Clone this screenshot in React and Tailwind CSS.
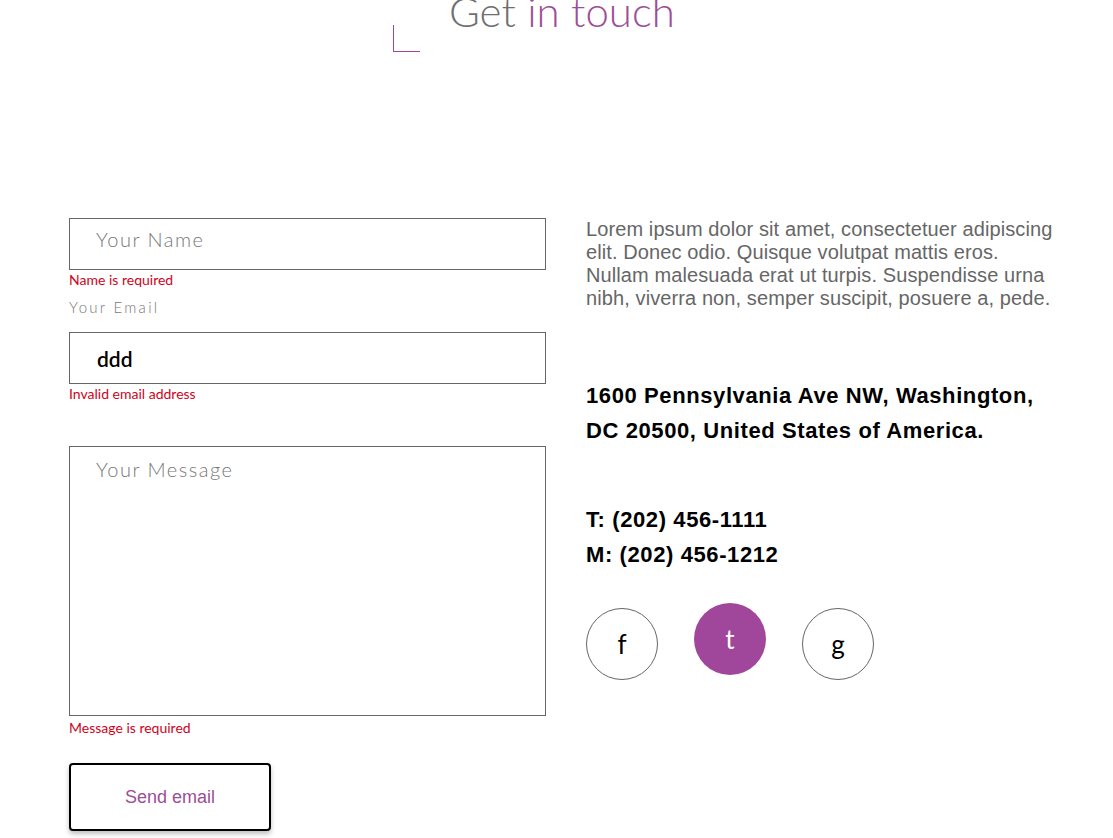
import React from "react";

export default function App() {
  return (
    <div className="min-h-[838px] w-[1113px] bg-white overflow-hidden" style={{ fontFamily: "Lato, 'Open Sans', sans-serif" }}>
      {/* Header */}
      <div className="flex items-start pl-[393px]">
        <div className="mt-[25px] h-[27px] w-[27px] border-l border-b border-[#a0469b]" />
        <h1 className="ml-[29px] mt-[-11px] text-[42px] leading-[44px] font-light text-[#6f6f6f]" style={{ fontFamily: "Lato, sans-serif" }}>
          Get <span className="text-[#9b4f96]">in touch</span>
        </h1>
      </div>

      <div className="flex gap-[40px] pl-[69px] pt-[166px]">
        {/* Form */}
        <form className="flex w-[477px] flex-col" onSubmit={(e) => e.preventDefault()}>
          <input
            type="text"
            placeholder="Your Name"
            className="h-[52px] w-full border border-[#666] bg-white pl-[26px] pb-[10px] text-[20px] font-light tracking-[1.5px] text-black outline-none placeholder:text-[#777]"
            style={{ fontFamily: "Lato, sans-serif" }}
          />
          <p className="mt-[1px] text-[14px] leading-[18px] text-[#d0021b]">Name is required</p>
          <label className="mt-[8px] text-[15px] leading-[20px] font-light tracking-[2.3px] text-[#777]">Your Email</label>
          <input
            type="text"
            defaultValue="ddd"
            className="mt-[15px] h-[52px] w-full border border-[#666] bg-white pl-[27px] text-[21px] font-semibold text-black outline-none"
            style={{ fontFamily: "Lato, sans-serif" }}
          />
          <p className="mt-[1px] text-[14px] leading-[18px] text-[#d0021b]">Invalid email address</p>
          <textarea
            placeholder="Your Message"
            className="mt-[43px] h-[270px] w-full resize-none border border-[#666] bg-white pl-[26px] pt-[9px] text-[20px] leading-[26px] font-light tracking-[1.5px] text-black outline-none placeholder:text-[#777]"
            style={{ fontFamily: "Lato, sans-serif" }}
          />
          <p className="mt-[3px] text-[14px] leading-[18px] text-[#d0021b]">Message is required</p>
          <button
            type="submit"
            className="mt-[26px] h-[68px] w-[202px] rounded-[4px] border-2 border-black bg-white text-[18px] text-[#9b4f96] shadow-[0_3px_5px_rgba(0,0,0,0.25)]"
            style={{ fontFamily: "'Liberation Sans', Arial, sans-serif" }}
          >
            Send email
          </button>
        </form>

        {/* Info */}
        <div className="flex w-[480px] flex-col" style={{ fontFamily: "'Liberation Sans', Arial, sans-serif" }}>
          <p className="text-[20px] leading-[23px] tracking-[0.1px] text-[#666]">
            Lorem ipsum dolor sit amet, consectetuer adipiscing elit. Donec odio. Quisque volutpat mattis eros. Nullam malesuada erat ut turpis. Suspendisse urna nibh, viverra non, semper suscipit, posuere a, pede.
          </p>
          <p className="mt-[68px] text-[22px] leading-[35px] tracking-[0.6px] font-bold text-black">
            1600 Pennsylvania Ave NW, Washington,
            <br />
            DC 20500, United States of America.
          </p>
          <p className="mt-[54px] text-[22px] leading-[35px] tracking-[0.6px] font-bold text-black">
            T: (202) 456-1111
            <br />
            M: (202) 456-1212
          </p>
          <div className="mt-[36px] flex gap-[36px]" style={{ fontFamily: "Lato, sans-serif" }}>
            <a href="#" className="flex h-[72px] w-[72px] items-center justify-center rounded-full border border-[#666] text-[26px] text-black">f</a>
            <a href="#" className="-mt-[5px] flex h-[72px] w-[72px] items-center justify-center rounded-full bg-[#a0469b] text-[26px] text-white">t</a>
            <a href="#" className="flex h-[72px] w-[72px] items-center justify-center rounded-full border border-[#666] text-[26px] text-black">g</a>
          </div>
        </div>
      </div>
    </div>
  );
}
